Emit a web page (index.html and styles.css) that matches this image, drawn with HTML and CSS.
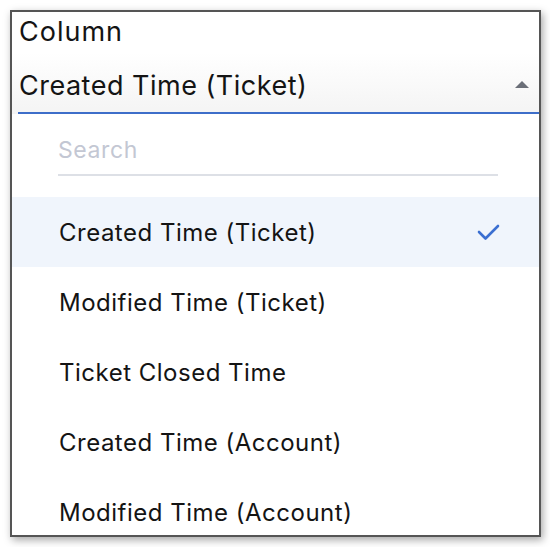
FILE: index.html
```html
<!DOCTYPE html>
<html>
<head>
<meta charset="utf-8">
<link rel="stylesheet" href="styles.css">
</head>
<body>
<div class="frame">
  <div class="field">
    <div class="label">Column</div>
    <div class="select">
      <span class="value">Created Time (Ticket)</span>
      <span class="caret"></span>
    </div>
  </div>
  <div class="menu">
    <div class="search"><span class="placeholder">Search</span></div>
    <ul class="options">
      <li class="option selected"><span>Created Time (Ticket)</span>
        <svg class="check" width="24" height="20" viewBox="0 0 24 20"><path d="M2 10 L8.5 16.5 L21 4" fill="none" stroke="#3b6fd1" stroke-width="2.6" stroke-linecap="round" stroke-linejoin="round"/></svg>
      </li>
      <li class="option"><span>Modified Time (Ticket)</span></li>
      <li class="option"><span>Ticket Closed Time</span></li>
      <li class="option"><span>Created Time (Account)</span></li>
      <li class="option"><span>Modified Time (Account)</span></li>
    </ul>
  </div>
</div>
</body>
</html>
```
FILE: styles.css
```css
html, body {
  margin: 0;
  padding: 0;
  background: #ffffff;
}
body {
  padding: 10px;
  font-family: Inter, "Open Sans", sans-serif;
  color: #141414;
}
.frame {
  box-sizing: border-box;
  width: 531px;
  height: 527px;
  border: 2px solid #555555;
  background: #ffffff;
  overflow: hidden;
  box-shadow: 2px 3px 8px rgba(0,0,0,0.35);
}
.field {
  background: linear-gradient(#ffffff, #ffffff 40%, #f4f4f4);
  padding: 0 0 0 6px;
}
.label {
  font-size: 27px;
  line-height: 40px;
  letter-spacing: 1px;
  padding-left: 1px;
}
.select {
  display: flex;
  align-items: center;
  justify-content: space-between;
  height: 62px;
  border-bottom: 2px solid #3d6ec9;
  padding-left: 1px;
  padding-right: 10px;
  padding-top: 7px;
  box-sizing: border-box;
}
.value {
  font-size: 27px;
  letter-spacing: 0.5px;
}
.caret {
  width: 0;
  height: 0;
  border-left: 7px solid transparent;
  border-right: 7px solid transparent;
  border-bottom: 7px solid #6b6f78;
  margin-bottom: 2px;
}
.menu {
  padding-top: 12px;
}
.search {
  margin: 0 41px 0 46px;
  height: 50px;
  border-bottom: 2px solid #dde0e6;
  display: flex;
  align-items: center;
  box-sizing: border-box;
}
.placeholder {
  font-size: 23px;
  letter-spacing: 0.6px;
  color: #c3c7d3;
}
.options {
  list-style: none;
  margin: 21px 0 0 0;
  padding: 0;
}
.option {
  height: 70px;
  display: flex;
  align-items: center;
  justify-content: space-between;
  padding: 0 38px 0 47px;
  font-size: 24px;
  letter-spacing: 0.5px;
}
.option.selected {
  background: #f0f5fc;
}
.check {
  display: block;
}
```
